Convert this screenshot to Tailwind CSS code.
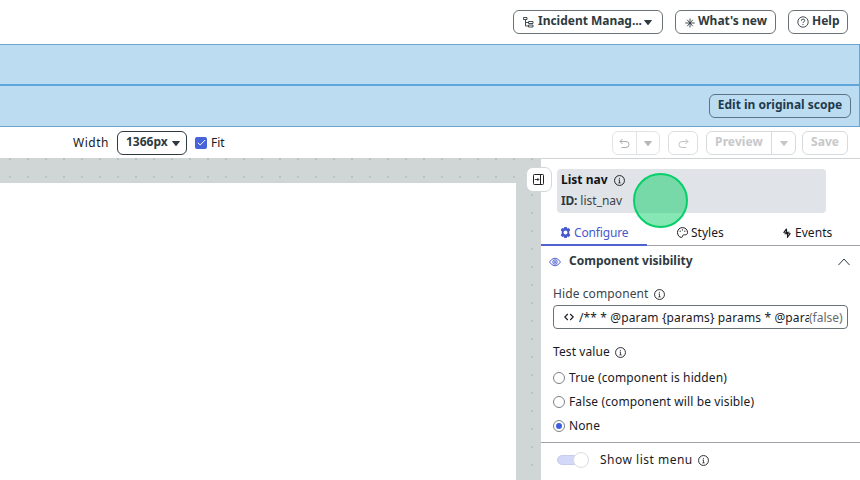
<!DOCTYPE html>
<html lang="en">
<head>
<meta charset="utf-8">
<title>UI Builder</title>
<script src="https://cdn.jsdelivr.net/npm/@tailwindcss/browser@4"></script>
</head>
<body class="w-[860px] h-[480px] overflow-hidden bg-white font-['Noto_Sans','Open_Sans',sans-serif] text-[12px] leading-4 text-[#181a1f]">
<svg class="hidden">
  <symbol id="info" viewBox="0 0 11 11"><circle cx="5.500" cy="5.500" r="4.950" fill="none" stroke="currentColor" stroke-width=".9"/><path d="M4.500 5.100h1M5.500 4.700V8M4.300 7.900h2.400" fill="none" stroke="currentColor" stroke-width=".7"/><circle cx="5.400" cy="3.200" r=".55" fill="currentColor"/></symbol>
  <symbol id="caret" viewBox="0 0 8 5"><path d="M.4 0h7.200q.6 0 .2.600L4.500 4.700q-.5.500-1 0L.2.600Q-.2 0 .4 0z" fill="currentColor"/></symbol>
</svg>
<div class="flex h-full flex-col">
  <header class="flex h-[44px] shrink-0 justify-end gap-3 pr-3 pt-[10px] text-[12px] font-bold text-[#2e3a40]">
    <button class="flex h-6 w-[150px] items-center rounded-[6px] border border-[#6b7276] pl-[9px]">
      <svg class="mr-[4px] mt-px h-[11px] w-[11px]" viewBox="0 0 11 11" fill="none" stroke="currentColor" stroke-width=".9"><path d="M.5.500h3.500v2H.5zM2.500 2.500V9H5M2.500 5.500H5M5.500 4.500h4.500v2H5.500zM5.500 8h4.500v2H5.500z"/></svg>
      <span class="mt-[-2px] tracking-[-0.02px]">Incident Manag...</span>
      <svg class="ml-[2px] mt-px h-[5px] w-[8px] shrink-0"><use href="#caret"/></svg>
    </button>
    <button class="flex h-6 w-[101px] items-center rounded-[6px] border border-[#6b7276] pl-[9px]">
      <svg class="mr-[3px] mt-px h-[10px] w-[10px]" viewBox="0 0 10 10" fill="none" stroke="currentColor" stroke-width=".9"><path d="M5 .5v9M.3 5h9.400M2.200 1.800l5.600 6.400M7.800 1.800L2.200 8.200"/></svg>
      <span class="mt-[-2px]">What's new</span>
    </button>
    <button class="flex h-6 w-[60px] items-center rounded-[6px] border border-[#6b7276] pl-[8px]">
      <svg class="mr-[3px] h-[12px] w-[12px]" viewBox="0 0 12 12" fill="none" stroke="currentColor" stroke-width=".9"><circle cx="6" cy="6" r="5.200"/><path d="M4.300 4.800q0-1.700 1.700-1.700t1.700 1.500q0 .9-1 1.300-.7.300-.7 1.200M6 8v1"/></svg>
      <span class="mt-[-2px]">Help</span>
    </button>
  </header>
  <section class="h-[83px] shrink-0 border border-l-0 border-[#6aa3cf] bg-[#bbdcf1]">
    <div class="h-[41px] border-b-2 border-[#5fa6da]"></div>
    <div class="flex h-[40px] justify-end pr-2 pt-2">
      <button class="h-6 w-[142px] rounded-[6px] border border-[#5b7486] pb-[2px] text-[12px] font-bold text-[#1f3a4c]">Edit in original scope</button>
    </div>
  </section>
  <div class="flex h-[31px] shrink-0 items-center pl-[73px] pr-3">
    <span class="w-[44px] tracking-[0.5px]">Width</span>
    <button class="flex h-6 w-[70px] items-center rounded-[6px] border border-[#2e3a40] pl-[8px] font-bold text-[#2e3a40]"><span class="mt-[-2px]">1366px</span><svg class="ml-[4px] mt-px h-[5px] w-[8px] shrink-0"><use href="#caret"/></svg></button>
    <span class="ml-2 mr-1 flex h-3 w-3 items-center justify-center rounded-[2px] bg-[#4763da]"><svg class="h-[9px] w-[9px]" viewBox="0 0 9 9" fill="none" stroke="#fff"><path d="M.8 4.700l2.400 2.300L8.200 2"/></svg></span>
    <span>Fit</span>
    <div class="ml-auto flex gap-[7px] font-bold text-[#c6c8ca]">
      <div class="mr-px flex h-6 w-[48px] rounded-[6px] border border-[#e1e3e4]">
        <span class="flex w-[24px] items-center justify-center border-r border-[#e1e3e4]"><svg class="mt-px h-[11px] w-[11px] text-[#aaa]" viewBox="0 0 11 11" fill="none" stroke="currentColor"><path d="M3.500 1L1 3.500 3.500 6M1 3.500h6a3 3 0 0 1 0 6H2.500"/></svg></span>
        <span class="flex flex-1 items-center justify-center text-[#b4b6b7]"><svg class="mt-px h-[5px] w-[8px]"><use href="#caret"/></svg></span>
      </div>
      <div class="flex h-6 w-[30px] items-center justify-center rounded-[6px] border border-[#dcdfe0]"><svg class="mt-px h-[11px] w-[11px] text-[#c2c4c5]" viewBox="0 0 11 11" fill="none" stroke="currentColor"><path d="M7.500 1L10 3.500 7.500 6M10 3.500H4a3 3 0 0 0 0 6h4.500"/></svg></div>
      <div class="ml-px flex h-6 w-[90px] rounded-[6px] border border-[#d7dadb]">
        <span class="w-[65px] border-r border-[#d7dadb] pt-[2px] text-center tracking-[0.1px]">Preview</span>
        <span class="flex flex-1 items-center justify-center"><svg class="mt-px h-[5px] w-[8px]"><use href="#caret"/></svg></span>
      </div>
      <div class="-ml-px h-6 w-[46px] rounded-[6px] border border-[#d7dadb] pt-[2px] text-center">Save</div>
    </div>
  </div>
  <main class="flex min-h-0 flex-1">
    <div class="relative w-[541px] shrink-0 bg-[#d0d6d6] pr-[25px] pt-[25px]">
      <svg class="absolute inset-0 h-full w-full"><defs><pattern id="dots" x="1" y="-8" width="18" height="18" patternUnits="userSpaceOnUse"><rect x="8" y="8" width="2" height="2" fill="#bdc3c3"/></pattern></defs><rect width="541" height="322" fill="url(#dots)"/></svg>
      <div class="relative h-full bg-white"></div>
      <div class="absolute left-[526px] top-[9px] flex h-[25px] w-[26px] items-center justify-center rounded-[7px] border border-[#d3d7da] bg-white">
        <svg class="mr-px h-[11px] w-[11px]" viewBox="0 0 11 11" fill="none" stroke="#222"><rect x=".5" y=".5" width="10" height="10" rx=".8"/><path d="M7.500 .5v10"/><path stroke-width=".9" d="M1.800 5.500h4M4.400 4l1.500 1.500L4.400 7"/></svg>
      </div>
    </div>
    <aside class="flex min-w-0 flex-1 flex-col border-t border-[#d0d3d5]">
      <div class="relative ml-4 mt-[10px] h-[44px] w-[269px] shrink-0 rounded-[4px] bg-[#e0e3e7] pl-1 pt-[3px]">
        <div class="flex items-center font-bold text-[#101214]">List nav<svg class="ml-[6px] mt-px h-[11px] w-[11px]"><use href="#info"/></svg></div>
        <div class="mt-[5px] text-[#3c4448]"><b class="tracking-[-0.2px] text-[#2e3a40]">ID:</b> list_nav</div>
        <div class="absolute left-[76px] top-[4px] h-[55px] w-[55px] rounded-full border-2 border-[#06d069] bg-[#0dd06a]/50"></div>
      </div>
      <nav class="flex h-[33px] shrink-0 border-b border-[#a0a4a8] pt-[12px]">
        <div class="-mb-px flex w-[106px] border-b-2 border-[#4f62d2] pl-[19px] text-[#4659cb]"><svg class="mr-[3px] mt-[2px] h-[11px] w-[11px]" viewBox="0 0 11 11"><path fill="currentColor" fill-rule="evenodd" d="M4.300 0h2.400l.4 1.500 1.700-.5 1.500 2-1.100 1.400v2.200L10.300 8l-1.500 2-1.700-.5-.4 1.500H4.300l-.4-1.500-1.700.5L.7 8l1.100-1.400V4.400L.7 3l1.500-2 1.700.5zM5.500 3.500a2 2 0 1 0 0 4 2 2 0 0 0 0-4z"/></svg><span class="tracking-[-0.15px]">Configure</span></div>
        <div class="flex w-[106px] pl-[30px]"><svg class="mr-[3px] mt-[2px] h-[11px] w-[11px]" viewBox="0 0 11 11" fill="none" stroke="currentColor"><path d="M5.500.600C2.500.600.5 2.800.5 5.500s1.800 4.900 3.900 4.900c1.600 0 .7-2.200 2.100-2.500 1.500-.3 4 .5 4-2.400 0-2.700-2-4.900-5-4.900z"/><g fill="currentColor" stroke="none"><circle cx="3.200" cy="4.200" r=".6"/><circle cx="5.500" cy="2.900" r=".6"/><circle cx="7.800" cy="4.200" r=".6"/></g></svg>Styles</div>
        <div class="flex pl-[29px] tracking-[0.05px]"><svg class="mr-[3px] mt-[3px] h-[10px] w-[10px]" viewBox="0 0 10 10" fill="none" stroke="currentColor" stroke-width="1.100"><path d="M4.500.800L2 4.300h5.500M4.500.800v5M2.500 5.700H8L5.500 9.200v-5"/></svg>Events</div>
      </nav>
      <div class="flex h-[30px] shrink-0 items-center pl-2 pr-[10px] text-[#2e3a40]">
        <svg class="mr-2 mt-[2px] h-[10px] w-[12px] text-[#4255d0]" viewBox="0 0 12 10" fill="none" stroke="currentColor" stroke-width=".95"><path d="M.5 5Q3 1.200 6 1.200T11.500 5Q9 8.800 6 8.800T.5 5z"/><circle cx="6" cy="5" r="2.200"/><circle cx="6" cy="5" r=".6"/></svg>
        <b class="mt-[-1px]">Component visibility</b>
        <svg class="ml-auto mt-px h-[8px] w-[12px]" viewBox="0 0 12 8" fill="none" stroke="currentColor"><path d="M.5 7L6 1l5.500 6"/></svg>
      </div>
      <div class="flex shrink-0 items-center pl-3 pt-[10px] tracking-[0.1px] text-[#3c4448]">Hide component<svg class="ml-[6px] mt-px h-[11px] w-[11px] text-[#181a1f]"><use href="#info"/></svg></div>
      <div class="ml-3 mt-[3px] flex h-6 w-[295px] shrink-0 items-center rounded-[4px] border border-[#6b7276] pl-[10px]">
        <svg class="mr-[5px] h-[8px] w-[10px] shrink-0" viewBox="0 0 10 8" fill="none" stroke="currentColor" stroke-width="1.100"><path d="M3.800 1L.8 4l3 3M6.200 1l3 3-3 3"/></svg>
        <span class="w-[230px] overflow-hidden whitespace-nowrap pt-px tracking-[0.13px]">/** * @param {params} params * @param</span>
        <span class="pt-px text-[#666c70]">(false)</span>
      </div>
      <div class="mt-[15px] flex shrink-0 items-center pl-3 tracking-[0.1px]">Test value<svg class="ml-[5px] mt-px h-[11px] w-[11px]"><use href="#info"/></svg></div>
      <div class="mt-[10px] flex shrink-0 flex-col gap-2 pl-3 tracking-[0.12px]">
        <div class="flex items-center gap-1"><i class="-mt-px h-3 w-3 rounded-full border border-[#7b8286]"></i>True (component is hidden)</div>
        <div class="flex items-center gap-1"><i class="-mt-px h-3 w-3 rounded-full border border-[#7b8286]"></i>False (component will be visible)</div>
        <div class="flex items-center gap-1"><i class="-mt-px flex h-3 w-3 items-center justify-center rounded-full border border-[#7b8286]"><i class="h-[6px] w-[6px] rounded-full bg-[#3f5de0]"></i></i>None</div>
      </div>
      <div class="mt-2 flex h-[35px] shrink-0 items-center border-t border-[#a0a4a8] pl-4">
        <div class="flex h-[10px] w-[32px] items-center justify-end rounded-full border border-[#c7cbee] bg-[#d3d8f8]"><i class="-mr-px h-4 w-4 shrink-0 rounded-full border border-[#dcdde2] bg-white"></i></div>
        <span class="ml-[11px] tracking-[0.5px]">Show list menu</span><svg class="ml-[5px] h-[11px] w-[11px]"><use href="#info"/></svg>
      </div>
    </aside>
  </main>
</div>
</body>
</html>
